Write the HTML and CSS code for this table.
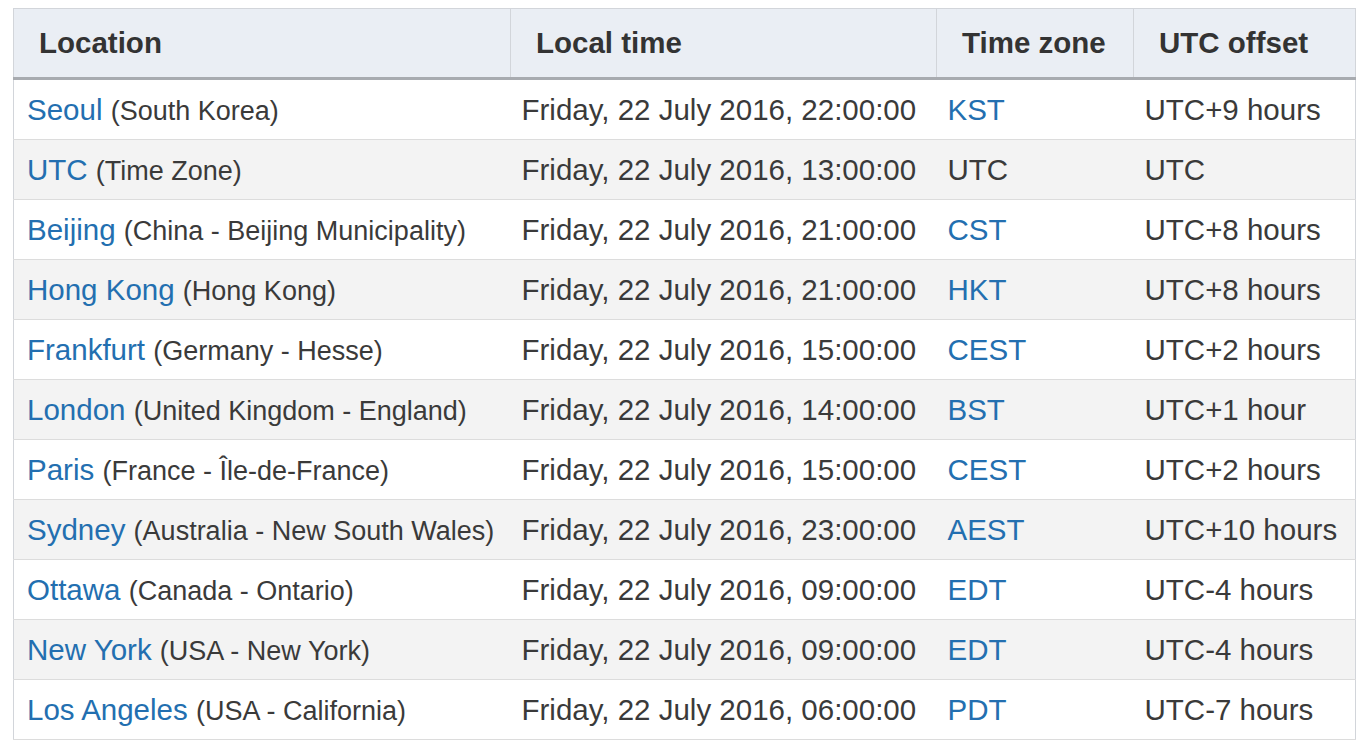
FILE: index.html
```html
<!DOCTYPE html>
<html lang="en">
<head>
<meta charset="utf-8">
<title>World clock</title>
<link rel="stylesheet" href="styles.css">
</head>
<body>
<table class="tz">
  <colgroup>
    <col class="c1"><col class="c2"><col class="c3"><col class="c4">
  </colgroup>
  <thead>
    <tr><th>Location</th><th>Local time</th><th>Time zone</th><th>UTC offset</th></tr>
  </thead>
  <tbody>
    <tr><td><a href="#">Seoul</a> <span class="sub">(South Korea)</span></td><td>Friday, 22 July 2016, 22:00:00</td><td><a href="#">KST</a></td><td>UTC+9 hours</td></tr>
    <tr><td><a href="#">UTC</a> <span class="sub">(Time Zone)</span></td><td>Friday, 22 July 2016, 13:00:00</td><td>UTC</td><td>UTC</td></tr>
    <tr><td><a href="#">Beijing</a> <span class="sub">(China - Beijing Municipality)</span></td><td>Friday, 22 July 2016, 21:00:00</td><td><a href="#">CST</a></td><td>UTC+8 hours</td></tr>
    <tr><td><a href="#">Hong Kong</a> <span class="sub">(Hong Kong)</span></td><td>Friday, 22 July 2016, 21:00:00</td><td><a href="#">HKT</a></td><td>UTC+8 hours</td></tr>
    <tr><td><a href="#">Frankfurt</a> <span class="sub">(Germany - Hesse)</span></td><td>Friday, 22 July 2016, 15:00:00</td><td><a href="#">CEST</a></td><td>UTC+2 hours</td></tr>
    <tr><td><a href="#">London</a> <span class="sub">(United Kingdom - England)</span></td><td>Friday, 22 July 2016, 14:00:00</td><td><a href="#">BST</a></td><td>UTC+1 hour</td></tr>
    <tr><td><a href="#">Paris</a> <span class="sub">(France - Île-de-France)</span></td><td>Friday, 22 July 2016, 15:00:00</td><td><a href="#">CEST</a></td><td>UTC+2 hours</td></tr>
    <tr><td><a href="#">Sydney</a> <span class="sub">(Australia - New South Wales)</span></td><td>Friday, 22 July 2016, 23:00:00</td><td><a href="#">AEST</a></td><td>UTC+10 hours</td></tr>
    <tr><td><a href="#">Ottawa</a> <span class="sub">(Canada - Ontario)</span></td><td>Friday, 22 July 2016, 09:00:00</td><td><a href="#">EDT</a></td><td>UTC-4 hours</td></tr>
    <tr><td><a href="#">New York</a> <span class="sub">(USA - New York)</span></td><td>Friday, 22 July 2016, 09:00:00</td><td><a href="#">EDT</a></td><td>UTC-4 hours</td></tr>
    <tr><td><a href="#">Los Angeles</a> <span class="sub">(USA - California)</span></td><td>Friday, 22 July 2016, 06:00:00</td><td><a href="#">PDT</a></td><td>UTC-7 hours</td></tr>
  </tbody>
</table>
</body>
</html>
```
FILE: styles.css
```css
html, body {
  margin: 0;
  padding: 0;
  background: #ffffff;
}
body {
  padding: 8px 0 0 13px;
  font-family: "Liberation Sans", Arial, sans-serif;
  font-size: 29.5px;
  color: #3a3a3a;
}
.tz {
  border-collapse: collapse;
  table-layout: fixed;
  width: 1342px;
  border: 1px solid #d2d5da;
}
.c1 { width: 497px; }
.c2 { width: 426px; }
.c3 { width: 197px; }
.c4 { width: 222px; }
.tz th {
  height: 70px;
  padding: 0 0 0 25px;
  text-align: left;
  font-weight: bold;
  color: #333;
  background: #eaeef4;
  border-left: 1px solid #d2d5da;
  border-bottom: 3px solid #a8abb0;
  box-sizing: border-box;
  white-space: nowrap;
}
.tz td {
  height: 59px;
  padding: 0 0 0 13px;
  border-bottom: 1px solid #dcdcdc;
  white-space: nowrap;
  vertical-align: middle;
}
.tz td + td { padding-left: 11px; }
.tz tbody tr:nth-child(even) td { background: #f3f3f3; }
.tz a {
  color: #236fb0;
  text-decoration: none;
}
.sub {
  font-size: 27px;
}
```
